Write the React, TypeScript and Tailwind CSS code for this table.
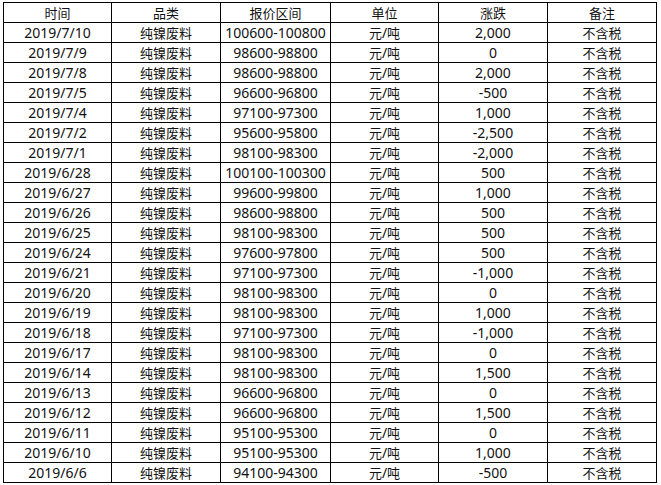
const rows: [string, string, string][] = [
  ['2019/7/10', '100600-100800', '2,000'],
  ['2019/7/9', '98600-98800', '0'],
  ['2019/7/8', '98600-98800', '2,000'],
  ['2019/7/5', '96600-96800', '-500'],
  ['2019/7/4', '97100-97300', '1,000'],
  ['2019/7/2', '95600-95800', '-2,500'],
  ['2019/7/1', '98100-98300', '-2,000'],
  ['2019/6/28', '100100-100300', '500'],
  ['2019/6/27', '99600-99800', '1,000'],
  ['2019/6/26', '98600-98800', '500'],
  ['2019/6/25', '98100-98300', '500'],
  ['2019/6/24', '97600-97800', '500'],
  ['2019/6/21', '97100-97300', '-1,000'],
  ['2019/6/20', '98100-98300', '0'],
  ['2019/6/19', '98100-98300', '1,000'],
  ['2019/6/18', '97100-97300', '-1,000'],
  ['2019/6/17', '98100-98300', '0'],
  ['2019/6/14', '98100-98300', '1,500'],
  ['2019/6/13', '96600-96800', '0'],
  ['2019/6/12', '96600-96800', '1,500'],
  ['2019/6/11', '95100-95300', '0'],
  ['2019/6/10', '95100-95300', '1,000'],
  ['2019/6/6', '94100-94300', '-500'],
];

const headers = ['时间', '品类', '报价区间', '单位', '涨跌', '备注'];

function Cell({ children, num }: { children: React.ReactNode; num?: boolean }) {
  return (
    <div
      className={
        num
          ? "h-[20px] border-r border-b border-black flex items-center justify-center leading-none whitespace-nowrap text-[14px] font-['Noto_Sans','Noto_Sans_CJK_SC',sans-serif]"
          : "h-[20px] border-r border-b border-black flex items-center justify-center leading-none whitespace-nowrap text-[13px] font-['Noto_Sans_CJK_SC',sans-serif]"
      }
    >
      {children}
    </div>
  );
}

export default function App() {
  return (
    <div className="w-[661px] h-[485px] bg-white overflow-hidden pt-[2px] pl-[3px] text-[#111]">
      <div className="grid grid-cols-[108px_109px_110px_108px_109px_109px] w-max border-l border-t border-black">
        {headers.map((h) => (
          <Cell key={h}>{h}</Cell>
        ))}
        {rows.map(([date, range, change]) => (
          <div key={date} className="contents">
            <Cell num>{date}</Cell>
            <Cell>纯镍废料</Cell>
            <Cell num>{range}</Cell>
            <Cell>
              元<span className="font-['Noto_Sans',sans-serif] text-[14px]">/</span>吨
            </Cell>
            <Cell num>{change}</Cell>
            <Cell>不含税</Cell>
          </div>
        ))}
      </div>
    </div>
  );
}
